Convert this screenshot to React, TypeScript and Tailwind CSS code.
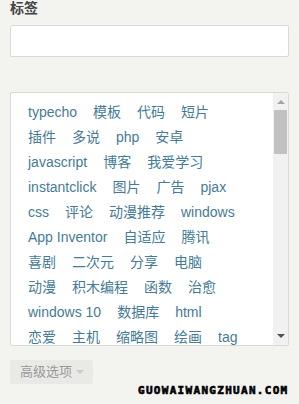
import React from "react";

const rows: string[][] = [
  ["typecho", "模板", "代码", "短片"],
  ["插件", "多说", "php", "安卓"],
  ["javascript", "博客", "我爱学习"],
  ["instantclick", "图片", "广告", "pjax"],
  ["css", "评论", "动漫推荐", "windows"],
  ["App Inventor", "自适应", "腾讯"],
  ["喜剧", "二次元", "分享", "电脑"],
  ["动漫", "积木编程", "函数", "治愈"],
  ["windows 10", "数据库", "html"],
  ["恋爱", "主机", "缩略图", "绘画", "tag"],
];

export default function App() {
  return (
    <div className="relative w-[299px] h-[404px] overflow-hidden bg-[#f3f3f0] px-[10px] font-['Liberation_Sans','Noto_Sans_CJK_SC',sans-serif]">
      <div className="text-[14px] leading-[16px] font-bold text-[#444444]">标签</div>
      <div className="mt-[9px] h-[32px] rounded-[2px] border border-[#d9d9d6] bg-white" />
      <div className="mt-[35px] flex h-[254px] overflow-hidden rounded-[2px] border border-[#d9d9d6] bg-white">
        <div className="flex-1 overflow-hidden pl-[17px] pr-[20px] pt-[7px]">
          {rows.map((r, i) => (
            <div key={i} className="flex gap-[16px] whitespace-nowrap text-[14px] leading-[25px] text-[#467b96]">
              {r.map((t) => (
                <span key={t}>{t}</span>
              ))}
            </div>
          ))}
        </div>
        <div className="flex w-[15px] flex-col bg-[#f1f1f1]">
          <div className="flex h-[17px] items-center justify-center">
            <div className="h-0 w-0 border-x-[4px] border-b-[4px] border-x-transparent border-b-[#a3a3a3]" />
          </div>
          <div className="mx-[1px] h-[44px] bg-[#c1c1c1]" />
          <div className="flex-1" />
          <div className="flex h-[18px] items-center justify-center">
            <div className="h-0 w-0 border-x-[4px] border-t-[4px] border-x-transparent border-t-[#505050]" />
          </div>
        </div>
      </div>
      <div className="mt-[14px] flex h-[24px] w-[83px] items-center rounded-[2px] bg-[#e9e9e6] pl-[10px] text-[13px] text-[#999999]">
        <span>高级选项</span>
        <span className="ml-[4px] h-0 w-0 border-x-[4px] border-t-[4px] border-x-transparent border-t-[#cccccc]" />
      </div>
      <div className="absolute left-[138px] top-[385px] text-[11px] leading-[11px] font-bold tracking-[1.3px] text-black [-webkit-text-stroke:0.6px_black] font-['DejaVu_Sans_Mono',monospace]">
        GUOWAIWANGZHUAN.COM
      </div>
    </div>
  );
}
